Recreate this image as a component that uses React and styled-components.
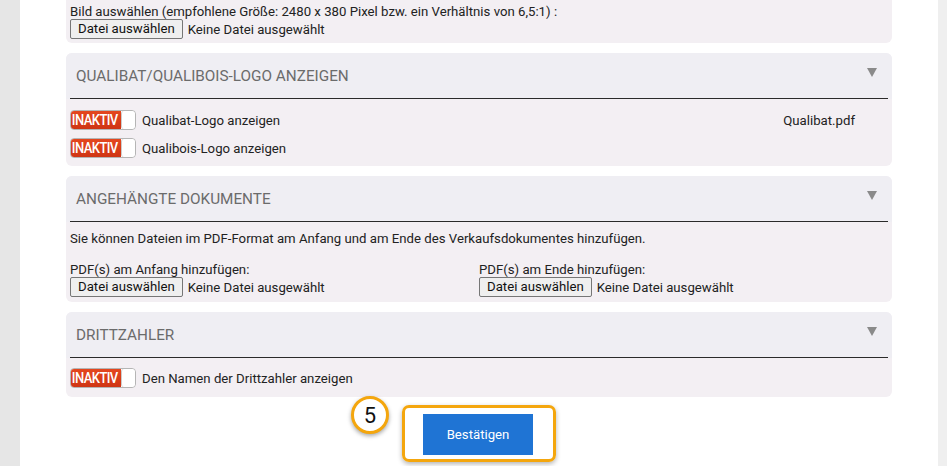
import React from "react";
import styled, { createGlobalStyle } from "styled-components";

const Global = createGlobalStyle`
  html, body { margin: 0; padding: 0; }
  body {
    font-family: Roboto, "Liberation Sans", Arial, sans-serif;
    font-size: 13.2px;
    color: #222;
    background: #fff;
    width: 947px;
    height: 466px;
    overflow: hidden;
  }
`;

const Page = styled.div`
  display: flex;
  width: 947px;
  height: 466px;
`;

const LeftStrip = styled.div`
  width: 20px;
  flex: none;
  background: #e6e6e6;
`;

const RightStrip = styled.div`
  width: 9px;
  flex: none;
  background: #efefef;
`;

const Content = styled.div`
  flex: 1;
  background: #fff;
  padding-left: 46px;
`;

const Column = styled.div`
  width: 826px;
  display: flex;
  flex-direction: column;
  gap: 10px;
`;

const Panel = styled.section`
  background: #f3eff3;
  border-radius: ${(p) => (p.$cut ? "0 0 6px 6px" : "6px")};
  padding: 0 4px ${(p) => p.$pb || 8}px;
`;

const Header = styled.div`
  height: 46px;
  box-sizing: border-box;
  display: flex;
  align-items: center;
  justify-content: space-between;
  padding: 0 6px;
  margin: 0 -4px;
  background: #efeef3;
  border-radius: 6px 6px 0 0;
  position: relative;
  &::after {
    content: "";
    position: absolute;
    left: 4px;
    right: 4px;
    bottom: 0;
    height: 1px;
    background: #2a2a2a;
  }
`;

const Title = styled.h3`
  margin: 0;
  padding-left: 4px;
  font-weight: 400;
  font-size: 15.3px;
  color: #6b6b6b;
`;

const Caret = styled.span`
  width: 0;
  height: 0;
  border-left: 5px solid transparent;
  border-right: 5px solid transparent;
  border-top: 9px solid #8a8a8a;
  margin-right: 9px;
  margin-top: -8px;
`;

const Body = styled.div`
  padding-top: ${(p) => p.$pt || 10}px;
  display: flex;
  flex-direction: column;
  gap: ${(p) => p.$gap || 0}px;
`;

const Line = styled.div`
  line-height: 15px;
`;

const FileRow = styled.div`
  display: flex;
  align-items: center;
  gap: 5px;
  height: 20px;
`;

const FileButton = styled.button`
  font-family: Roboto, "Liberation Sans", Arial, sans-serif;
  font-size: 13.2px;
  color: #111;
  background: #efefef;
  border: 1px solid #767676;
  border-radius: 2px;
  height: 20px;
  padding: 0 7px;
  line-height: 18px;
`;

const ToggleRow = styled.div`
  display: flex;
  align-items: center;
  justify-content: space-between;
  padding-right: 33px;
`;

const ToggleLabel = styled.label`
  display: flex;
  align-items: center;
  gap: 6px;
`;

const Toggle = styled.span`
  display: inline-flex;
  width: 66px;
  height: 20px;
  box-sizing: border-box;
  border: 1px solid #b5b5b5;
  border-radius: 4px;
  overflow: hidden;
  background: #fff;
`;

const ToggleText = styled.span`
  flex: 1;
  overflow: hidden;
  background: linear-gradient(#e4471f, #cf3514);
  color: #fff;
  font-family: Roboto, "Liberation Sans", Arial, sans-serif;
  font-size: 15.5px;
  font-weight: 500;
  letter-spacing: -0.7px;
  line-height: 18px;
  white-space: nowrap;
`;

const ToggleInner = styled.span`
  display: inline-block;
  transform: scaleX(0.84);
  transform-origin: left center;
  padding-left: 1px;
`;

const Knob = styled.span`
  width: 13px;
  flex: none;
  background: #fff;
  border-left: 1px solid #ccc;
  border-radius: 3px;
`;

const Grid = styled.div`
  display: grid;
  grid-template-columns: 1fr 1fr;
  margin-top: 16px;
`;

const Footer = styled.div`
  width: 826px;
  display: flex;
  justify-content: center;
  padding-top: 8px;
`;

const Highlight = styled.div`
  position: relative;
  border: 3px solid #f4a60d;
  border-radius: 7px;
  padding: 6px 20px 4px 18px;
  box-shadow: 0 2px 5px rgba(0, 0, 0, 0.3);
`;

const Confirm = styled.button`
  width: 110px;
  height: 41px;
  background: #1f74d4;
  color: #fff;
  border: none;
  font-family: Roboto, "Liberation Sans", Arial, sans-serif;
  font-size: 13.2px;
  display: block;
`;

const Badge = styled.span`
  position: absolute;
  left: -54px;
  top: -12px;
  width: 32px;
  height: 32px;
  border-radius: 50%;
  border: 3px solid #f4a60d;
  background: #fff;
  box-shadow: 0 2px 4px rgba(0, 0, 0, 0.35);
  display: flex;
  align-items: center;
  justify-content: center;
  font-size: 22px;
  color: #111;
`;

function FilePicker() {
  return (
    <FileRow>
      <FileButton type="button">Datei auswählen</FileButton>
      <span>Keine Datei ausgewählt</span>
    </FileRow>
  );
}

function InactiveToggle({ label, extra }) {
  return (
    <ToggleRow>
      <ToggleLabel>
        <Toggle>
          <ToggleText>
            <ToggleInner>INAKTIV</ToggleInner>
          </ToggleText>
          <Knob />
        </Toggle>
        <span>{label}</span>
      </ToggleLabel>
      {extra && <span>{extra}</span>}
    </ToggleRow>
  );
}

function SectionHeader({ title }) {
  return (
    <Header>
      <Title>{title}</Title>
      <Caret />
    </Header>
  );
}

export default function App() {
  return (
    <>
      <Global />
      <Page>
        <LeftStrip />
        <Content>
          <Column>
            <Panel $cut $pb={4}>
              <Body $pt={4}>
                <Line>Bild auswählen (empfohlene Größe: 2480 x 380 Pixel bzw. ein Verhältnis von 6,5:1) :</Line>
                <FilePicker />
              </Body>
            </Panel>

            <Panel $pb={8}>
              <SectionHeader title="QUALIBAT/QUALIBOIS-LOGO ANZEIGEN" />
              <Body $pt={11} $gap={8}>
                <InactiveToggle label="Qualibat-Logo anzeigen" extra="Qualibat.pdf" />
                <InactiveToggle label="Qualibois-Logo anzeigen" />
              </Body>
            </Panel>

            <Panel $pb={5}>
              <SectionHeader title="ANGEHÄNGTE DOKUMENTE" />
              <Body $pt={9}>
                <Line>Sie können Dateien im PDF-Format am Anfang und am Ende des Verkaufsdokumentes hinzufügen.</Line>
                <Grid>
                  <div>
                    <Line>PDF(s) am Anfang hinzufügen:</Line>
                    <FilePicker />
                  </div>
                  <div>
                    <Line>PDF(s) am Ende hinzufügen:</Line>
                    <FilePicker />
                  </div>
                </Grid>
              </Body>
            </Panel>

            <Panel $pb={9}>
              <SectionHeader title="DRITTZAHLER" />
              <Body $pt={10}>
                <InactiveToggle label="Den Namen der Drittzahler anzeigen" />
              </Body>
            </Panel>
          </Column>
          <Footer>
            <Highlight>
              <Badge>5</Badge>
              <Confirm type="button">Bestätigen</Confirm>
            </Highlight>
          </Footer>
        </Content>
        <RightStrip />
      </Page>
    </>
  );
}
